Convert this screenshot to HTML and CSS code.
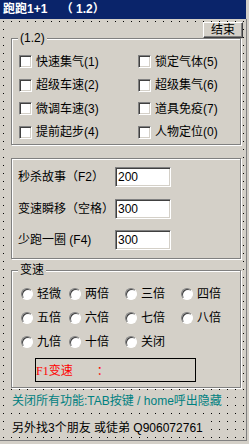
FILE: index.html
```html
<!DOCTYPE html>
<html lang="zh-CN">
<head>
<meta charset="utf-8">
<title>跑跑1+1</title>
<link rel="stylesheet" href="styles.css">
</head>
<body>
<div class="window">
  <div class="titlebar">跑跑1+1    （ 1.2）</div>
  <div class="client">
    <div class="toprow"><button class="btn">结束</button></div>
    <div class="groups">
      <section class="group g1">
        <span class="legend">(1.2)</span>
        <div class="checks">
          <label class="check"><span class="box"></span>快速集气(1)</label>
          <label class="check"><span class="box"></span>锁定气体(5)</label>
          <label class="check"><span class="box"></span>超级车速(2)</label>
          <label class="check"><span class="box"></span>超级集气(6)</label>
          <label class="check"><span class="box"></span>微调车速(3)</label>
          <label class="check"><span class="box"></span>道具免疫(7)</label>
          <label class="check"><span class="box"></span>提前起步(4)</label>
          <label class="check"><span class="box"></span>人物定位(0)</label>
        </div>
      </section>
      <section class="group g2">
        <span class="field-label">秒杀故事（F2）</span><input class="edit" type="text" value="200" readonly>
        <span class="field-label">变速瞬移（空格）</span><input class="edit" type="text" value="300" readonly>
        <span class="field-label">少跑一圈 (F4)</span><input class="edit" type="text" value="300" readonly>
      </section>
      <section class="group g3">
        <span class="legend">变速</span>
        <div class="radios">
          <label class="radio"><span class="dot"></span>轻微</label>
          <label class="radio"><span class="dot"></span>两倍</label>
          <label class="radio"><span class="dot"></span>三倍</label>
          <label class="radio"><span class="dot"></span>四倍</label>
          <label class="radio"><span class="dot"></span>五倍</label>
          <label class="radio"><span class="dot"></span>六倍</label>
          <label class="radio"><span class="dot"></span>七倍</label>
          <label class="radio"><span class="dot"></span>八倍</label>
          <label class="radio"><span class="dot"></span>九倍</label>
          <label class="radio"><span class="dot"></span>十倍</label>
          <label class="radio"><span class="dot"></span>关闭</label>
        </div>
        <div class="status">F1变速<span class="colon">：</span></div>
      </section>
    </div>
    <div class="note teal">关闭所有功能:TAB按键 / home呼出隐藏</div>
    <div class="note q">另外找3个朋友 或徒弟 Q906072761</div>
  </div>
</div>
</body>
</html>
```
FILE: styles.css
```css
* { box-sizing: border-box; }
html, body { margin: 0; padding: 0; }
body {
  width: 249px;
  height: 444px;
  overflow: hidden;
  background: #d4d0c8;
  color: #000;
  font: 12px/14px "Liberation Sans", "Noto Sans CJK SC", sans-serif;
}
.window { width: 247px; }
.titlebar {
  width: 246px;
  height: 19px;
  background: #0a246a;
  color: #fff;
  font-weight: bold;
  line-height: 19px;
  padding-left: 3px;
  white-space: pre;
}
.client {
  position: relative;
  isolation: isolate;
  height: 422px;
  background: #d4d0c8;
  border-right: 1px solid #808080;
  border-bottom: 1px solid #808080;
}
.client::before {
  content: "";
  position: absolute;
  inset: 0;
  z-index: -1;
  background-image: linear-gradient(to right, #000 1px, transparent 1px);
  background-size: 8px 8px;
  background-position: 3px 2px;
  -webkit-mask-image: linear-gradient(to bottom, #000 1px, transparent 1px);
  mask-image: linear-gradient(to bottom, #000 1px, transparent 1px);
  -webkit-mask-size: 8px 8px;
  mask-size: 8px 8px;
  -webkit-mask-position: 3px 2px;
  mask-position: 3px 2px;
}
.toprow { height: 5px; padding-top: 3px; }
.btn {
  position: relative;
  z-index: 1;
  display: block;
  margin: 0 0 0 203px;
  width: 40px;
  height: 16px;
  padding: 0;
  appearance: none;
  background: #d4d0c8;
  border: 1px solid;
  border-color: #fff #404040 #404040 #fff;
  box-shadow: inset -1px -1px 0 #808080;
  font: inherit;
  line-height: 13px;
  color: #000;
}
.groups {
  margin-left: 11px;
  width: 231px;
  background: #d4d0c8;
  padding: 14px 0 1px;
}
.group {
  width: 230px;
  border: 1px solid #808080;
  box-shadow: inset 1px 1px 0 #fff, 1px 1px 0 #fff;
}
.g1 { height: 107px; }
.g2 {
  height: 101px;
  margin-top: 13px;
  padding: 8px 0 0 6px;
  display: grid;
  grid-template-columns: 97px 56px;
  grid-auto-rows: 20px;
  row-gap: 11.5px;
  align-items: center;
}
.g3 { height: 118px; margin-top: 11px; }
.legend {
  display: block;
  width: max-content;
  margin: -8px 0 0 6px;
  padding: 0 2px;
  background: #d4d0c8;
  line-height: 14px;
}
.checks {
  display: grid;
  grid-template-columns: 119px auto;
  row-gap: 10.5px;
  margin-top: 10px;
  padding-left: 7px;
}
.check, .radio {
  display: flex;
  align-items: center;
  white-space: nowrap;
}
.check { height: 13px; }
.box {
  flex: none;
  width: 13px;
  height: 13px;
  margin-right: 4px;
  background: #fff;
  border: 1px solid;
  border-color: #808080 #fff #fff #808080;
  box-shadow: inset 1px 1px 0 #404040, inset -1px -1px 0 #d4d0c8;
}
.field-label { grid-column: 1; white-space: nowrap; min-width: 0; }
.edit {
  grid-column: 2;
  justify-self: start;
  appearance: none;
  width: 56px;
  height: 20px;
  margin: 0;
  padding: 0 0 0 2px;
  background: #fff;
  border: 1px solid;
  border-color: #808080 #fff #fff #808080;
  box-shadow: inset 1px 1px 0 #404040, inset -1px -1px 0 #d4d0c8;
  font: inherit;
  color: #000;
  outline: none;
}
.radios {
  display: grid;
  grid-template-columns: 48px 56px 56px auto;
  row-gap: 12px;
  margin-top: 11px;
  padding-left: 9px;
}
.radio { height: 12px; }
.dot {
  flex: none;
  width: 12px;
  height: 12px;
  margin-right: 4px;
  border-radius: 50%;
  background: #fff;
  border: 1px solid;
  border-color: #808080 #fff #fff #808080;
  box-shadow: inset 1px 1px 0 #404040;
}
.status {
  margin: 10px 0 0 23px;
  width: 161px;
  height: 24px;
  border: 1px solid #000;
  color: #f00;
  font-family: "Liberation Serif", "Noto Sans CJK SC", serif;
  line-height: 22px;
  white-space: nowrap;
}
.colon { margin-left: 24px; font-family: "Noto Sans CJK SC", sans-serif; }
.note {
  width: max-content;
  margin: 5px 0 0 11px;
  padding: 0 4px 0 1px;
  background: #d4d0c8;
  line-height: 14px;
  white-space: nowrap;
}
.teal { color: #008080; }
.q { margin-top: 13px; }
```
